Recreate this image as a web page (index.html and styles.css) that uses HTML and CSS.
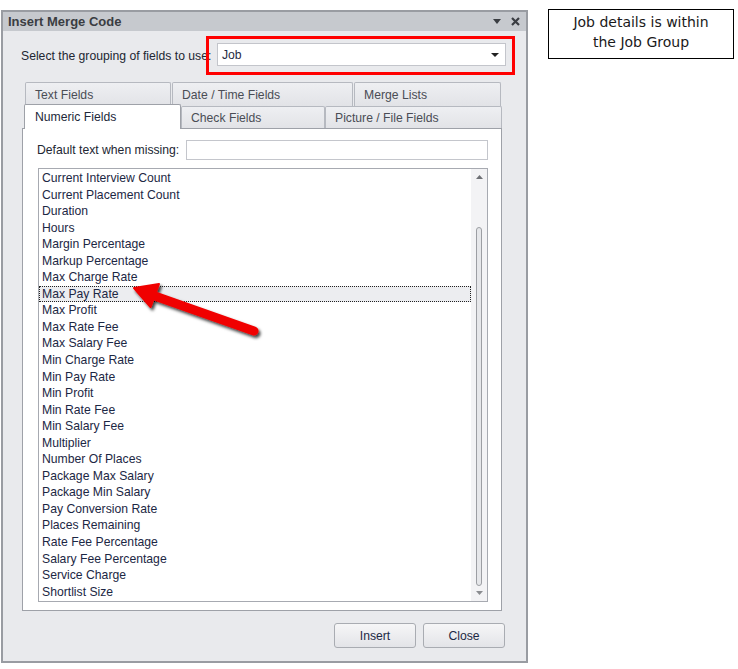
FILE: index.html
```html
<!DOCTYPE html>
<html>
<head>
<meta charset="utf-8">
<link rel="stylesheet" href="styles.css">
</head>
<body>
<div class="page">
  <div class="dialog">
    <div class="titlebar">
      <span class="title">Insert Merge Code</span>
      <span class="ctrls">
        <svg width="8" height="5" viewBox="0 0 8 5"><path d="M0 0H8L4 5Z" fill="#3a3d42"/></svg>
        <svg width="9" height="9" viewBox="0 0 9 9"><path d="M1 1L8 8M8 1L1 8" stroke="#3a3d42" stroke-width="2.2"/></svg>
      </span>
    </div>
    <div class="content">
      <div class="group-row">
        <span class="group-label">Select the grouping of fields to use:</span>
        <div class="redbox">
          <div class="combo">
            <span>Job</span>
            <svg width="8" height="4" viewBox="0 0 8 4"><path d="M0 0H8L4 4Z" fill="#222"/></svg>
          </div>
        </div>
      </div>
      <div class="tabs">
        <div class="tabrow back">
          <div class="tab t-text">Text Fields</div>
          <div class="tab t-date">Date / Time Fields</div>
          <div class="tab t-merge">Merge Lists</div>
        </div>
        <div class="tabrow front">
          <div class="tab active t-num">Numeric Fields</div>
          <div class="tab t-check">Check Fields</div>
          <div class="tab t-pic">Picture / File Fields</div>
        </div>
      </div>
      <div class="panel">
        <div class="default-row">
          <span class="default-label">Default text when missing:</span>
          <div class="textinput"></div>
        </div>
        <div class="listbox">
          <ul class="items">
            <li>Current Interview Count</li>
            <li>Current Placement Count</li>
            <li>Duration</li>
            <li>Hours</li>
            <li>Margin Percentage</li>
            <li>Markup Percentage</li>
            <li>Max Charge Rate</li>
            <li class="selected">Max Pay Rate</li>
            <li>Max Profit</li>
            <li>Max Rate Fee</li>
            <li>Max Salary Fee</li>
            <li>Min Charge Rate</li>
            <li>Min Pay Rate</li>
            <li>Min Profit</li>
            <li>Min Rate Fee</li>
            <li>Min Salary Fee</li>
            <li>Multiplier</li>
            <li>Number Of Places</li>
            <li>Package Max Salary</li>
            <li>Package Min Salary</li>
            <li>Pay Conversion Rate</li>
            <li>Places Remaining</li>
            <li>Rate Fee Percentage</li>
            <li>Salary Fee Percentage</li>
            <li>Service Charge</li>
            <li>Shortlist Size</li>
          </ul>
          <div class="scrollbar">
            <svg class="sb-arrow" width="7" height="4" viewBox="0 0 7 4"><path d="M3.5 0L7 4H0Z" fill="#6e7075"/></svg>
            <div class="sb-track"><div class="sb-thumb"></div></div>
            <svg class="sb-arrow" width="7" height="4" viewBox="0 0 7 4"><path d="M0 0H7L3.5 4Z" fill="#8a8c90"/></svg>
          </div>
        </div>
      </div>
      <div class="buttons">
        <div class="btn">Insert</div>
        <div class="btn">Close</div>
      </div>
    </div>
  </div>
  <div class="callout">Job details is within<br>the Job Group</div>
  <svg class="arrow" width="738" height="669" viewBox="0 0 738 669">
    <defs>
      <filter id="sh" x="-20%" y="-20%" width="140%" height="140%">
        <feDropShadow dx="2" dy="2.5" stdDeviation="1.6" flood-color="#000" flood-opacity="0.75"/>
      </filter>
    </defs>
    <g filter="url(#sh)">
      <line x1="254" y1="331" x2="152" y2="295" stroke="#f00000" stroke-width="9" stroke-linecap="round"/>
      <path d="M134 288L159 284L150.6 307Z" fill="#f00000" stroke="#f00000" stroke-width="2" stroke-linejoin="round"/>
    </g>
  </svg>
</div>
</body>
</html>
```

FILE: styles.css
```css
html, body {
  margin: 0;
  padding: 0;
  background: #ffffff;
}

body {
  font-family: "Liberation Sans", Arial, sans-serif;
  font-size: 12.2px;
  color: #1f2433;
}

.page {
  position: relative;
  display: flex;
  align-items: flex-start;
  width: 738px;
  height: 669px;
  padding: 10px 0 0 1px;
  box-sizing: border-box;
}

.dialog {
  width: 527px;
  height: 653px;
  box-sizing: border-box;
  border: 2px solid #999ca2;
  background: #e9eaed;
  display: flex;
  flex-direction: column;
}

.titlebar {
  height: 19px;
  flex: none;
  background: #c6c9ce;
  display: flex;
  align-items: center;
  justify-content: space-between;
  padding: 0 6px 0 5px;
}

.title {
  font-weight: bold;
  font-size: 13px;
  color: #3a3d42;
}

.ctrls {
  display: flex;
  align-items: center;
  gap: 10px;
}

.content {
  flex: 1;
  display: flex;
  flex-direction: column;
}

.group-row {
  display: flex;
  align-items: center;
  margin-top: 5px;
  padding-left: 18px;
}

.group-label {
  width: 185px;
  white-space: nowrap;
  color: #222632;
}

.redbox {
  width: 309px;
  height: 39px;
  box-sizing: border-box;
  border: 3px solid #ff0000;
  padding: 4px 6px 0 8px;
}

.combo {
  height: 23px;
  box-sizing: border-box;
  border: 1px solid #c3c5cb;
  background: #ffffff;
  display: flex;
  align-items: center;
  justify-content: space-between;
  padding: 0 6px 0 4px;
  color: #1f2a44;
}

.tabs {
  margin: 7px 0 0 19px;
  display: flex;
  flex-direction: column;
}

.tabrow {
  display: flex;
}

.tabrow.back {
  margin-left: 3px;
  height: 24px;
  gap: 1px;
}

.tabrow.front {
  margin-left: 2px;
  height: 22px;
  align-items: flex-end;
}

.tab {
  box-sizing: border-box;
  border: 1px solid #b6b9c0;
  border-bottom: none;
  border-radius: 2px 2px 0 0;
  background: linear-gradient(#eeeff2, #e2e3e7);
  color: #4a4d55;
  padding-left: 9px;
  display: flex;
  align-items: center;
  white-space: nowrap;
}

.back .tab {
  height: 24px;
}

.front .tab {
  height: 22px;
}

.front .tab.active {
  height: 25px;
  margin-bottom: -1px;
  background: #ffffff;
  border-color: #9ea1a8;
  color: #22283a;
  position: relative;
  z-index: 2;
  padding-left: 10px;
}

.t-text { width: 146px; }
.t-date { width: 181px; }
.t-merge { width: 147px; }
.t-num { width: 157px; }
.t-check { width: 144px; }
.t-pic { width: 177px; }

.panel {
  margin-left: 19px;
  width: 480px;
  height: 483px;
  box-sizing: border-box;
  border: 1px solid #9ea1a8;
  background: #ffffff;
  padding: 11px 13px 0 15px;
  display: flex;
  flex-direction: column;
}

.default-row {
  display: flex;
  align-items: center;
  height: 20px;
}

.default-label {
  width: 149px;
  margin-left: -1px;
  white-space: nowrap;
  color: #222632;
}

.textinput {
  flex: 1;
  height: 20px;
  box-sizing: border-box;
  border: 1px solid #c4c6cc;
  background: #ffffff;
}

.listbox {
  margin-top: 8px;
  height: 434px;
  box-sizing: border-box;
  border: 1px solid #a7aab1;
  display: flex;
}

.items {
  list-style: none;
  margin: 0;
  padding: 1px 0 0 0;
  flex: 1;
}

.items li {
  height: 16.56px;
  line-height: 16.56px;
  padding-left: 3px;
  box-sizing: border-box;
  color: #1c2744;
  white-space: nowrap;
}

.items li.selected {
  background: #ecedf0;
  outline: 1px dotted #222;
  outline-offset: -1px;
}

.scrollbar {
  width: 16px;
  background: #f3f3f5;
  display: flex;
  flex-direction: column;
  align-items: center;
  padding: 6px 0 6px 0;
  box-sizing: border-box;
}

.sb-track {
  flex: 1;
  display: flex;
  flex-direction: column;
  justify-content: flex-end;
  padding: 48px 0 5px 0;
}

.sb-thumb {
  flex: 1;
  width: 6px;
  box-sizing: border-box;
  border: 1px solid #9c9ea3;
  border-radius: 3px;
  background: #e6e7ea;
}

.buttons {
  display: flex;
  justify-content: flex-end;
  gap: 7px;
  margin-top: 12px;
  padding-right: 21px;
}

.btn {
  width: 82px;
  height: 25px;
  box-sizing: border-box;
  border: 1px solid #a9acb2;
  border-radius: 3px;
  background: linear-gradient(#f6f6f7, #e3e4e8);
  display: flex;
  align-items: center;
  justify-content: center;
  color: #1d2944;
}

.callout {
  margin: -1px 0 0 20px;
  width: 186px;
  height: 50px;
  box-sizing: border-box;
  border: 1px solid #000000;
  font-family: "DejaVu Sans", sans-serif;
  font-size: 14px;
  line-height: 20px;
  text-align: center;
  color: #1a1a1a;
  padding-top: 2px;
}

.arrow {
  position: absolute;
  left: 0;
  top: 0;
  pointer-events: none;
}
```
